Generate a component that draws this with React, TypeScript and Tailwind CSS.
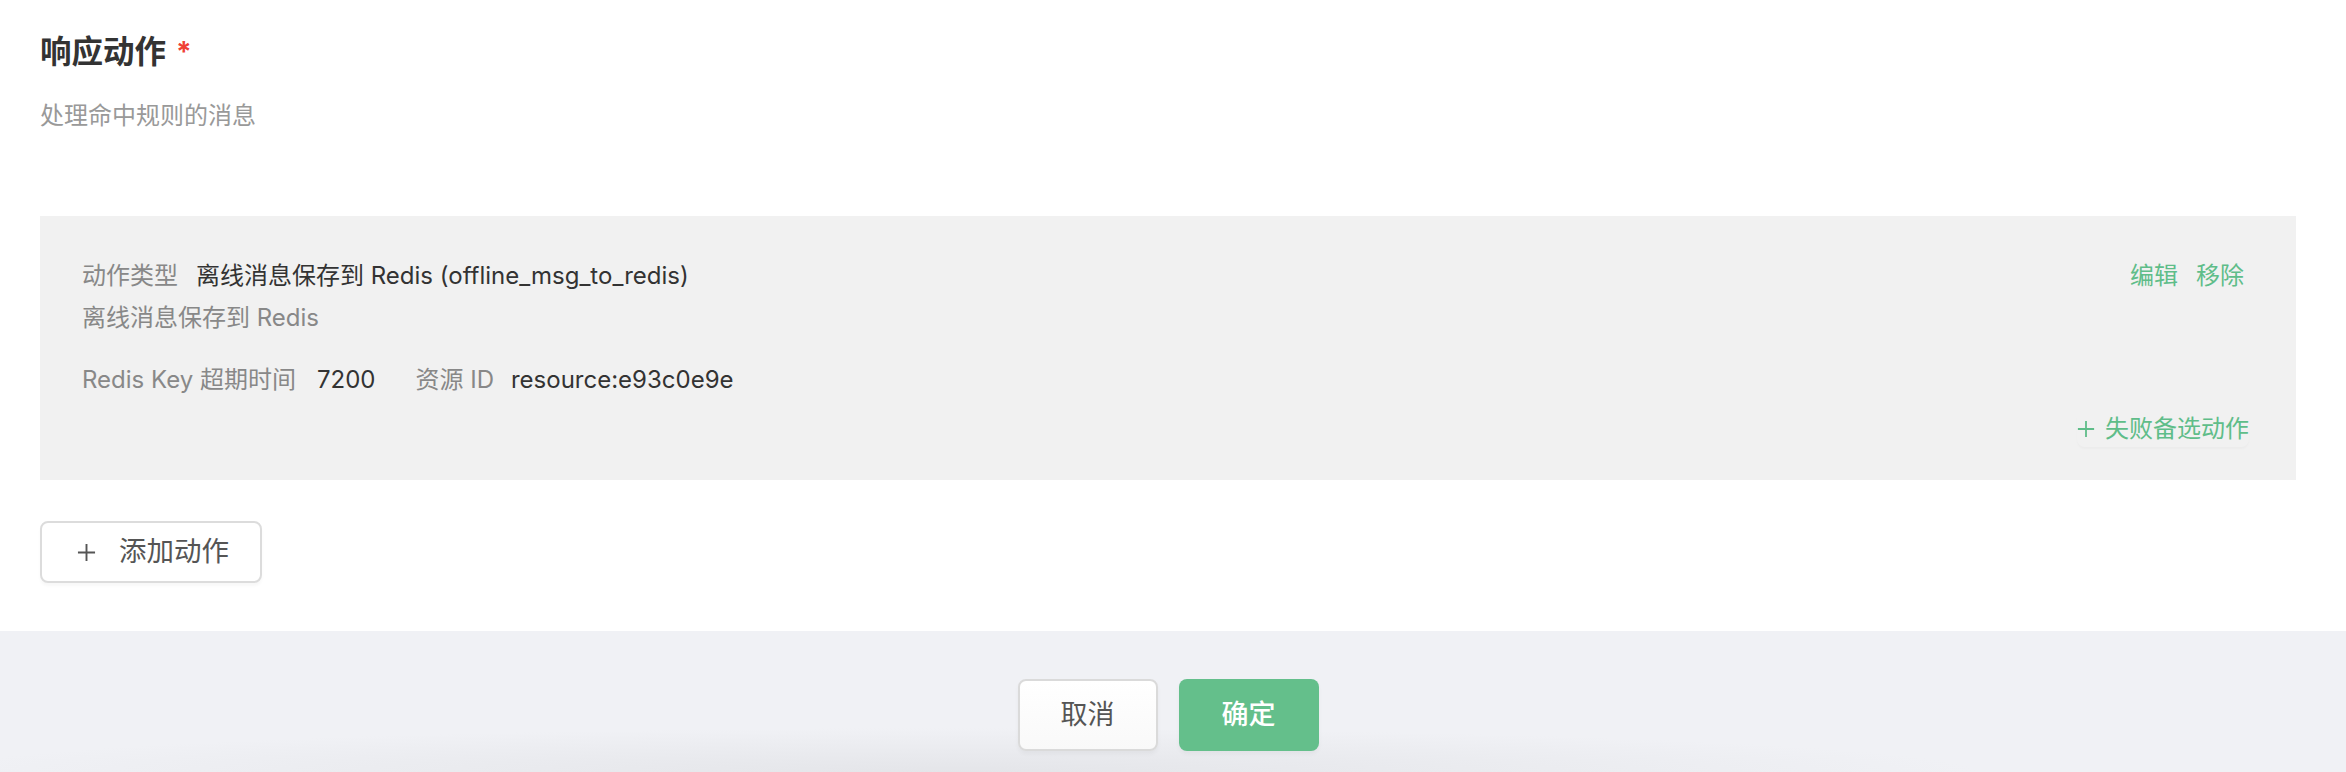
import React from "react";

function PlusIcon({ className }: { className?: string }) {
  return (
    <svg viewBox="0 0 20 20" className={className} fill="none" stroke="currentColor" strokeWidth="2">
      <path d="M10 1v18M1 10h18" />
    </svg>
  );
}

export default function App() {
  return (
    <div className="w-[2346px] h-[772px] bg-white flex flex-col font-[Inter,'Noto_Sans_CJK_SC',sans-serif]">
      <div className="px-[40px] pt-[32px] pb-[48px] pr-[50px]">
        <h2 className="flex items-center text-[31.5px] leading-[40px] font-bold text-[#333]">
          响应动作
          <span className="ml-[10px] text-[28px] text-[#ef4136]">*</span>
        </h2>
        <p className="mt-[26px] text-[24px] leading-[36px] text-[#999]">
          处理命中规则的消息
        </p>

        <div className="mt-[82px] bg-[#f1f1f1] pl-[42px] pr-[47px] pt-[42px] pb-[33px] text-[24px] leading-[36px]">
          <div className="flex justify-between">
            <div className="flex gap-[18px]">
              <span className="text-[#888]">动作类型</span>
              <span className="text-[#333]">
                离线消息保存到 Redis (offline_msg_to_redis)
              </span>
            </div>
            <div className="flex gap-[18px] mr-[5px] text-[#5fbd89]">
              <button>编辑</button>
              <button>移除</button>
            </div>
          </div>
          <div className="mt-[6px] text-[#888]">离线消息保存到 Redis</div>
          <div className="mt-[26px] flex">
            <span className="text-[#888]">Redis Key 超期时间</span>
            <span className="ml-[21px] text-[#333]">7200</span>
            <span className="ml-[40px] text-[#888]">资源 ID</span>
            <span className="ml-[17px] text-[#333]">resource:e93c0e9e</span>
          </div>
          <div className="mt-[13px] flex justify-end">
            <button className="flex items-center gap-[10px] text-[#5fbd89] rounded-lg shadow-[0_2px_2px_rgba(0,0,0,0.025)]">
              <PlusIcon className="w-[18px] h-[18px]" />
              失败备选动作
            </button>
          </div>
        </div>

        <button className="mt-[41px] flex items-center w-[222px] h-[62px] pl-[35px] gap-[23px] border-2 border-[#dcdcdc] rounded-lg bg-white text-[27.5px] text-[#555] shadow-[0_3px_3px_rgba(0,0,0,0.03)]">
          <PlusIcon className="w-[19px] h-[19px]" />
          添加动作
        </button>
      </div>

      <div className="flex-1 flex justify-center gap-[21px] pt-[48px] pr-[10px] bg-[#f0f1f5] bg-[radial-gradient(1020px_44px_at_960px_100%,#e4e5e9,rgba(240,241,245,0))]">
        <button className="w-[140px] h-[72px] rounded-lg border-2 border-[#dadada] bg-[linear-gradient(to_bottom,#ffffff,#f9f9f9)] text-[27px] text-[#555] shadow-[0_3px_4px_rgba(0,0,0,0.04)]">
          取消
        </button>
        <button className="w-[140px] h-[72px] rounded-lg bg-[#64bf8b] text-[27px] text-white font-medium shadow-[0_3px_4px_rgba(0,0,0,0.04)]">
          确定
        </button>
      </div>
    </div>
  );
}
